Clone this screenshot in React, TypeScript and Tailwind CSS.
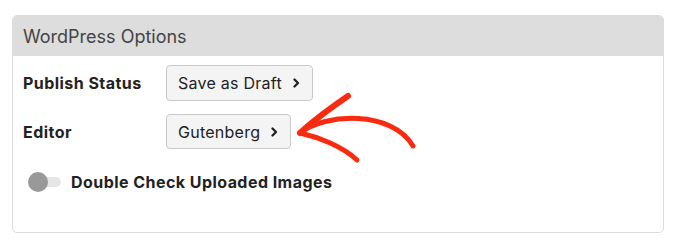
import React from 'react';

function Chevron() {
  return (
    <svg width="7" height="10" viewBox="0 0 7 10" aria-hidden className="shrink-0">
      <path d="M1.5 1.5 L5 5 L1.5 8.5" fill="none" stroke="#222" strokeWidth="2.3" strokeLinecap="round" strokeLinejoin="round" />
    </svg>
  );
}

function PickerButton({ label, height }: { label: string; height: string }) {
  return (
    <button
      type="button"
      className={`${height} flex items-center gap-[11px] pl-[11px] pr-[12px] border border-[#c9c9c9] rounded-[4px] bg-[#f4f4f4] text-[16px] tracking-[0.25px] text-[#222]`}
    >
      <span>{label}</span>
      <Chevron />
    </button>
  );
}

export default function App() {
  return (
    <div
      className="relative w-[680px] h-[250px] bg-white pt-[15px] pl-[12px]"
      style={{ fontFamily: 'Inter, "Liberation Sans", sans-serif' }}
    >
      <div className="w-[652px] h-[218px] border border-[#dcdcdc] rounded-[5px] overflow-hidden">
        <div className="h-[40px] bg-[#dddddd] px-[10px] flex items-center text-[18px] text-[#444]">
          WordPress Options
        </div>
        <div className="px-[10px] pt-[9px]">
          <div className="flex items-center">
            <div className="w-[143px] font-bold text-[16px] tracking-[0.45px] text-[#222]">Publish Status</div>
            <PickerButton label="Save as Draft" height="h-[36px]" />
          </div>
          <div className="flex items-center mt-[13px]">
            <div className="w-[143px] font-bold text-[16px] tracking-[0.45px] text-[#222]">Editor</div>
            <PickerButton label="Gutenberg" height="h-[35px]" />
          </div>
          <div className="flex items-center mt-[23px] pl-[5px] h-[20px]">
            <div className="relative w-[33px] h-[20px] shrink-0">
              <div className="absolute left-[8px] right-0 top-[5px] h-[10px] rounded-full bg-[#e6e6e6]" />
              <div className="absolute left-0 top-0 w-[20px] h-[20px] rounded-full bg-[#999999]" />
            </div>
            <div className="ml-[10px] font-bold text-[16px] tracking-[0.45px] text-[#222]">Double Check Uploaded Images</div>
          </div>
        </div>
      </div>

      <svg
        className="absolute left-[280px] top-[80px]"
        width="150"
        height="100"
        viewBox="0 0 150 100"
        aria-hidden
      >
        <g fill="none" stroke="#f82b10" strokeWidth="5" strokeLinecap="round" strokeLinejoin="round">
          <path d="M68 16 C52 27, 34 40, 20 53" strokeWidth="6" />
          <path d="M20 53 C45 33, 112 30, 133 66" />
          <path d="M20 53 C38 57, 62 66, 77 80" />
        </g>
      </svg>
    </div>
  );
}
